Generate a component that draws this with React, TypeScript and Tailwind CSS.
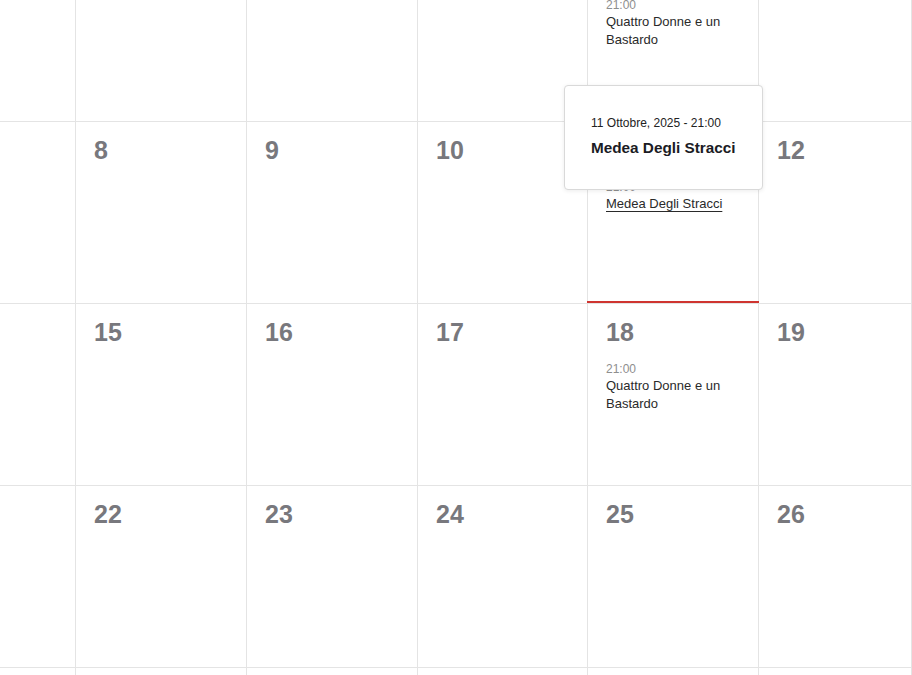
type Day = {
  n: number;
  event?: { time: string; title: string; hover?: boolean };
  active?: boolean;
};

const quattro = { time: '21:00', title: 'Quattro Donne e un Bastardo' };

const weeks: Day[][] = [
  [{ n: 30 }, { n: 1 }, { n: 2 }, { n: 3 }, { n: 4, event: quattro }, { n: 5 }],
  [
    { n: 7 },
    { n: 8 },
    { n: 9 },
    { n: 10 },
    { n: 11, event: { time: '21:00', title: 'Medea Degli Stracci', hover: true }, active: true },
    { n: 12 },
  ],
  [{ n: 14 }, { n: 15 }, { n: 16 }, { n: 17 }, { n: 18, event: quattro }, { n: 19 }],
  [{ n: 21 }, { n: 22 }, { n: 23 }, { n: 24 }, { n: 25 }, { n: 26 }],
  [{ n: 28 }, { n: 29 }, { n: 30 }, { n: 31 }, { n: 1 }, { n: 2 }],
];

function Tooltip() {
  return (
    <div className="absolute left-[-24px] top-[-37px] z-10 h-[105px] w-[199px] rounded-[4px] border border-[#d9d9d9] bg-white pl-[26px] pt-[29px] shadow-[0_1px_4px_rgba(0,0,0,0.08)]">
      <p className="text-[12px] leading-[16px] text-[#222]">11 Ottobre, 2025 - 21:00</p>
      <p className="mt-[7px] text-[15.3px] font-bold leading-[20px] text-[#1b1b24]">Medea Degli Stracci</p>
    </div>
  );
}

function Cell({ day }: { day: Day }) {
  return (
    <div className="relative h-[182px] border-b border-r border-[#e4e4e4] pl-[18px] pr-[18px] pt-[13px]">
      <div className="text-[25px] font-bold leading-[30px] text-[#78787d]">{day.n}</div>
      {day.event && (
        <div className="mt-[14px]">
          <p className="text-[12px] leading-[16px] text-[#8e8e8e]">{day.event.time}</p>
          <p
            className={
              day.event.hover
                ? 'text-[13px] leading-[18px] text-[#2a2a2a] underline underline-offset-[3px]'
                : 'text-[13px] leading-[18px] text-[#2a2a2a]'
            }
          >
            {day.event.title}
          </p>
        </div>
      )}
      {day.active && (
        <>
          <Tooltip />
          <span className="absolute bottom-0 left-[-1px] right-[-1px] h-[2px] bg-[#cf3430]" />
        </>
      )}
    </div>
  );
}

export default function App() {
  return (
    <div className="h-[675px] w-[912px] overflow-hidden bg-white font-['Liberation_Sans',Arial,sans-serif]">
      <div className="ml-[-95px] mt-[-60px] grid grid-cols-[171px_171px_171px_170px_171px_1fr]">
        {weeks.map((week, i) =>
          week.map((day, j) => <Cell key={`${i}-${j}`} day={day} />)
        )}
      </div>
    </div>
  );
}
